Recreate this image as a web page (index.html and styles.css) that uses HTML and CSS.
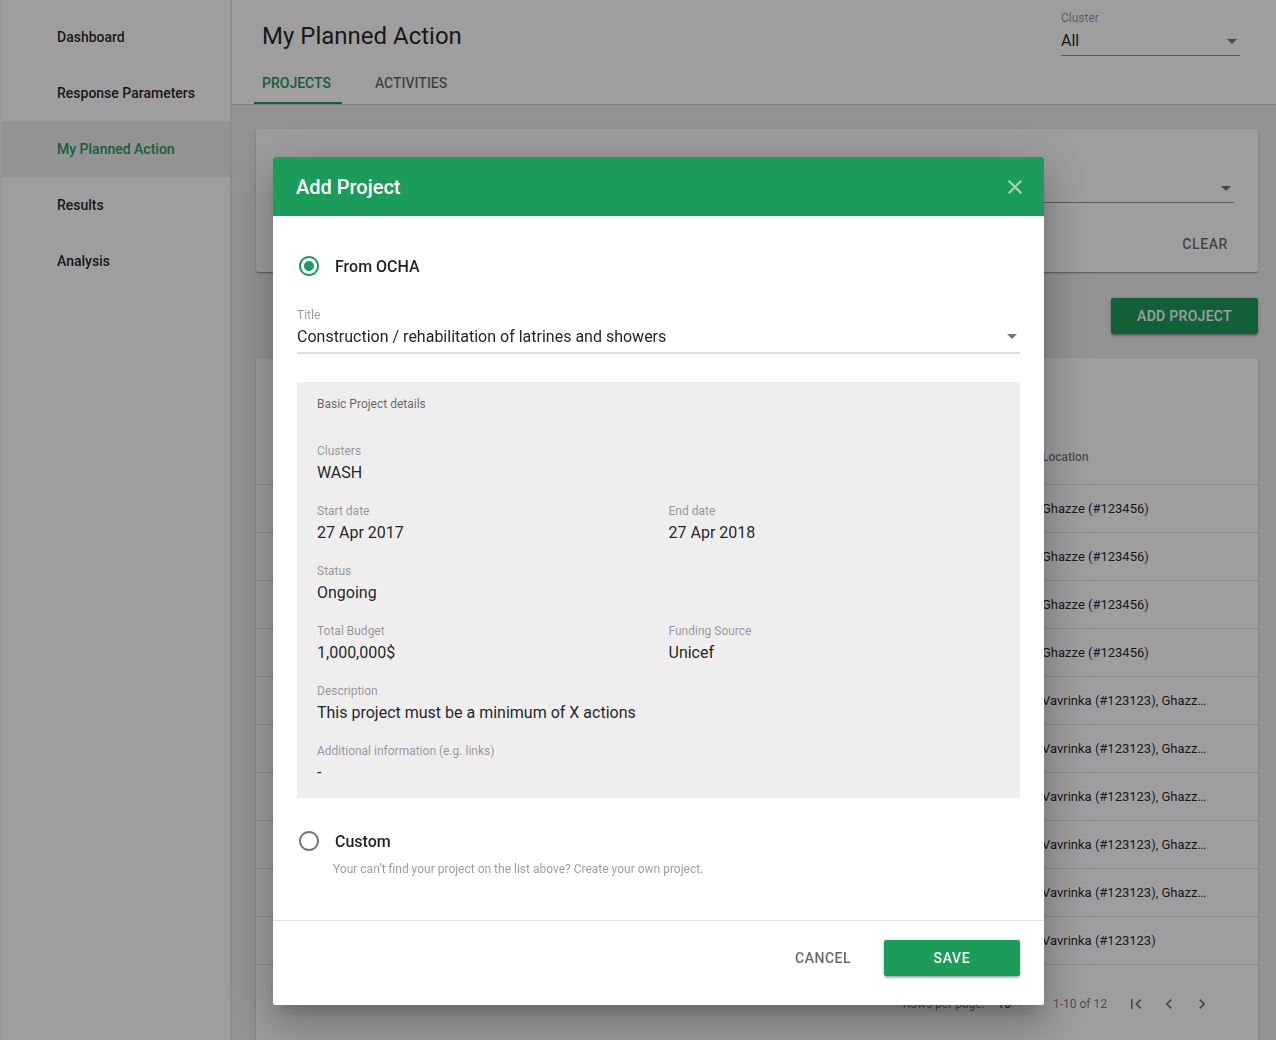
FILE: index.html
```html
<!DOCTYPE html>
<html lang="en">
<head>
<meta charset="utf-8">
<title>My Planned Action</title>
<link rel="stylesheet" href="styles.css">
</head>
<body>
<div class="app">
  <nav class="sidebar">
    <div class="nav-item">Dashboard</div>
    <div class="nav-item">Response Parameters</div>
    <div class="nav-item active">My Planned Action</div>
    <div class="nav-item">Results</div>
    <div class="nav-item">Analysis</div>
  </nav>
  <div class="main">
    <header class="topbar">
      <div class="topbar-left">
        <h1 class="page-title">My Planned Action</h1>
        <div class="tabs">
          <div class="tab active">PROJECTS</div>
          <div class="tab">ACTIVITIES</div>
        </div>
      </div>
      <div class="cluster-select">
        <div class="sel-label">Cluster</div>
        <div class="sel-field">
          <span class="sel-value">All</span>
          <svg class="arrow" viewBox="0 0 24 24"><path d="M7 10l5 5 5-5z"/></svg>
        </div>
      </div>
    </header>
    <section class="content">
      <div class="card filters">
        <div class="filter-row">
          <div class="filter-field"><div class="sel-label">Partner</div><div class="sel-field"><span class="sel-value"></span><svg class="arrow" viewBox="0 0 24 24"><path d="M7 10l5 5 5-5z"/></svg></div></div>
          <div class="filter-field"><div class="sel-label">Status</div><div class="sel-field"><span class="sel-value"></span><svg class="arrow" viewBox="0 0 24 24"><path d="M7 10l5 5 5-5z"/></svg></div></div>
          <div class="filter-field"><div class="sel-label">Location</div><div class="sel-field"><span class="sel-value"></span><svg class="arrow" viewBox="0 0 24 24"><path d="M7 10l5 5 5-5z"/></svg></div></div>
        </div>
        <div class="filter-actions"><button class="text-btn">CLEAR</button></div>
      </div>
      <div class="toolbar"><button class="btn-primary add-btn">ADD PROJECT</button></div>
      <div class="card table-card">
        <div class="table-title"></div>
        <div class="trow thead"><div class="tcell fill"></div><div class="tcell loc">Location</div></div>
        <div class="trow"><div class="tcell fill"></div><div class="tcell loc">Ghazze (#123456)</div></div>
        <div class="trow"><div class="tcell fill"></div><div class="tcell loc">Ghazze (#123456)</div></div>
        <div class="trow"><div class="tcell fill"></div><div class="tcell loc">Ghazze (#123456)</div></div>
        <div class="trow"><div class="tcell fill"></div><div class="tcell loc">Ghazze (#123456)</div></div>
        <div class="trow"><div class="tcell fill"></div><div class="tcell loc">Vavrinka (#123123), Ghazze (#123456)</div></div>
        <div class="trow"><div class="tcell fill"></div><div class="tcell loc">Vavrinka (#123123), Ghazze (#123456)</div></div>
        <div class="trow"><div class="tcell fill"></div><div class="tcell loc">Vavrinka (#123123), Ghazze (#123456)</div></div>
        <div class="trow"><div class="tcell fill"></div><div class="tcell loc">Vavrinka (#123123), Ghazze (#123456)</div></div>
        <div class="trow"><div class="tcell fill"></div><div class="tcell loc">Vavrinka (#123123), Ghazze (#123456)</div></div>
        <div class="trow"><div class="tcell fill"></div><div class="tcell loc">Vavrinka (#123123)</div></div>
        <div class="pagination">
          <span class="pg-label">Rows per page:</span>
          <span class="pg-select">10<svg class="pg-arrow" viewBox="0 0 24 24"><path d="M7 10l5 5 5-5z"/></svg></span>
          <span class="pg-range">1-10 of 12</span>
          <span class="pg-btn"><svg viewBox="0 0 24 24"><path d="M18.41 16.59L13.82 12l4.59-4.59L17 6l-6 6 6 6zM6 6h2v12H6z"/></svg></span>
          <span class="pg-btn"><svg viewBox="0 0 24 24"><path d="M15.41 16.59L10.83 12l4.58-4.59L14 6l-6 6 6 6z"/></svg></span>
          <span class="pg-btn"><svg viewBox="0 0 24 24"><path d="M10 6L8.59 7.41 13.17 12l-4.58 4.59L10 18l6-6z"/></svg></span>
        </div>
      </div>
    </section>
  </div>
</div>

<div class="backdrop"></div>

<div class="dialog">
  <div class="dialog-header">
    <h2 class="dialog-title">Add Project</h2>
    <svg class="close-icon" viewBox="0 0 24 24"><path d="M19 6.41L17.59 5 12 10.59 6.41 5 5 6.41 10.59 12 5 17.59 6.41 19 12 13.41 17.59 19 19 17.59 13.41 12z"/></svg>
  </div>
  <div class="dialog-body">
    <div class="radio-row">
      <svg class="radio checked" viewBox="0 0 24 24"><path d="M12 7c-2.76 0-5 2.24-5 5s2.24 5 5 5 5-2.24 5-5-2.24-5-5-5zm0-5C6.48 2 2 6.48 2 12s4.48 10 10 10 10-4.48 10-10S17.52 2 12 2zm0 18c-4.42 0-8-3.58-8-8s3.58-8 8-8 8 3.58 8 8-3.58 8-8 8z"/></svg>
      <span class="radio-label">From OCHA</span>
    </div>
    <div class="title-field">
      <div class="f-label">Title</div>
      <div class="title-value">
        <span>Construction / rehabilitation of latrines and showers</span>
        <svg class="arrow" viewBox="0 0 24 24"><path d="M7 10l5 5 5-5z"/></svg>
      </div>
    </div>
    <div class="details">
      <div class="details-title">Basic Project details</div>
      <div class="details-grid">
        <div class="d-field"><div class="f-label">Clusters</div><div class="d-value">WASH</div></div>
        <div class="d-field"></div>
        <div class="d-field"><div class="f-label">Start date</div><div class="d-value">27 Apr 2017</div></div>
        <div class="d-field"><div class="f-label">End date</div><div class="d-value">27 Apr 2018</div></div>
        <div class="d-field full"><div class="f-label">Status</div><div class="d-value">Ongoing</div></div>
        <div class="d-field"><div class="f-label">Total Budget</div><div class="d-value">1,000,000$</div></div>
        <div class="d-field"><div class="f-label">Funding Source</div><div class="d-value">Unicef</div></div>
        <div class="d-field full"><div class="f-label">Description</div><div class="d-value">This project must be a minimum of X actions</div></div>
        <div class="d-field full last"><div class="f-label">Additional information (e.g. links)</div><div class="d-value">-</div></div>
      </div>
    </div>
    <div class="radio-row custom-row">
      <svg class="radio" viewBox="0 0 24 24"><path d="M12 2C6.48 2 2 6.48 2 12s4.48 10 10 10 10-4.48 10-10S17.52 2 12 2zm0 18c-4.42 0-8-3.58-8-8s3.58-8 8-8 8 3.58 8 8-3.58 8-8 8z"/></svg>
      <span class="radio-label">Custom</span>
    </div>
    <div class="hint">Your can’t find your project on the list above? Create your own project.</div>
  </div>
  <div class="dialog-footer">
    <button class="text-btn cancel-btn">CANCEL</button>
    <button class="btn-primary save-btn">SAVE</button>
  </div>
</div>
</body>
</html>
```

FILE: styles.css
```css
* { box-sizing: border-box; }

html, body {
  margin: 0;
  padding: 0;
  width: 1276px;
  height: 1040px;
  overflow: hidden;
}

body {
  font-family: Roboto, "Liberation Sans", Arial, sans-serif;
  color: rgba(0, 0, 0, 0.87);
  background: #eeeeee;
}

button {
  font-family: inherit;
  border: none;
  background: none;
  cursor: pointer;
  padding: 0;
}

.app {
  display: flex;
  height: 1040px;
}

/* Sidebar */
.sidebar {
  width: 232px;
  flex: 0 0 232px;
  background: #ffffff;
  border-left: 2px solid #f6f6f6;
  border-right: 2px solid #e4e4e4;
  padding-top: 9px;
}

.nav-item {
  height: 56px;
  display: flex;
  align-items: center;
  padding-left: 55px;
  font-size: 14px;
  font-weight: 500;
  color: rgba(0, 0, 0, 0.87);
}

.nav-item.active {
  background: #eeeeee;
  color: #1c9c5a;
}

/* Main */
.main {
  flex: 1;
  display: flex;
  flex-direction: column;
  min-width: 0;
}

.topbar {
  height: 105px;
  flex: 0 0 105px;
  background: #ffffff;
  border-bottom: 1px solid #cfcfcf;
  display: flex;
  justify-content: space-between;
}

.topbar-left {
  padding-left: 22px;
  display: flex;
  flex-direction: column;
}

.page-title {
  margin: 22px 0 0 8px;
  font-size: 24px;
  line-height: 28px;
  font-weight: 400;
  color: rgba(0, 0, 0, 0.87);
}

.tabs {
  display: flex;
  margin-top: 12px;
}

.tab {
  height: 42px;
  padding: 2px 10px 0;
  display: flex;
  align-items: center;
  font-size: 14px;
  font-weight: 500;
  letter-spacing: 0;
  color: rgba(0, 0, 0, 0.6);
  border-bottom: 2px solid transparent;
}

.tab + .tab { margin-left: 23px; }

.tab.active {
  color: #1c9c5a;
  border-bottom-color: #1c9c5a;
  padding-left: 8px;
  padding-right: 11px;
}

.cluster-select {
  width: 179px;
  margin-right: 36px;
  padding-top: 11px;
}

.sel-label {
  font-size: 12px;
  line-height: 14px;
  color: rgba(0, 0, 0, 0.45);
}

.sel-field {
  margin-top: 6px;
  height: 25px;
  padding-bottom: 4px;
  border-bottom: 1px solid rgba(0, 0, 0, 0.42);
  display: flex;
  align-items: center;
  justify-content: space-between;
}

.sel-value {
  font-size: 16px;
  line-height: 20px;
  color: rgba(0, 0, 0, 0.87);
}

.arrow {
  width: 24px;
  height: 24px;
  fill: rgba(0, 0, 0, 0.54);
  margin-right: -4px;
  flex: 0 0 24px;
}

/* Content */
.content {
  flex: 1;
  padding: 24px 18px 0 24px;
  display: flex;
  flex-direction: column;
}

.card {
  background: #ffffff;
  border-radius: 2px;
  box-shadow: 0 1px 3px rgba(0, 0, 0, 0.2), 0 1px 1px rgba(0, 0, 0, 0.14), 0 2px 1px -1px rgba(0, 0, 0, 0.12);
}

.filters {
  height: 143px;
  padding: 29px 24px 10px;
  display: flex;
  flex-direction: column;
}

.filter-row {
  display: grid;
  grid-template-columns: 1fr 1fr 1fr;
  column-gap: 24px;
}

.filter-field .sel-label { color: transparent; }

.filter-actions {
  margin-top: 23px;
  display: flex;
  justify-content: flex-end;
  margin-right: -2px;
}

.text-btn {
  height: 36px;
  padding: 0 8px;
  font-size: 14px;
  font-weight: 500;
  letter-spacing: 0.6px;
  color: rgba(0, 0, 0, 0.6);
}

.toolbar {
  margin-top: 26px;
  display: flex;
  justify-content: flex-end;
}

.btn-primary {
  height: 36px;
  background: #1c9c5a;
  color: #ffffff;
  font-size: 14px;
  font-weight: 500;
  letter-spacing: 0.7px;
  border-radius: 2px;
  box-shadow: 0 1px 5px rgba(0, 0, 0, 0.2), 0 2px 2px rgba(0, 0, 0, 0.14), 0 3px 1px -2px rgba(0, 0, 0, 0.12);
}

.add-btn {
  width: 147px;
  letter-spacing: 0.3px;
}

.table-card {
  margin-top: 24px;
  flex: 1;
}

.table-title {
  height: 71px;
}

.trow {
  display: flex;
  height: 48px;
  border-bottom: 1px solid #e0e0e0;
  align-items: center;
}

.trow.thead {
  height: 56px;
}

.tcell.fill { flex: 1; }

.tcell.loc {
  width: 216px;
  flex: 0 0 216px;
  padding-right: 50px;
  font-size: 13px;
  white-space: nowrap;
  overflow: hidden;
  text-overflow: ellipsis;
  color: rgba(0, 0, 0, 0.87);
}

.thead .tcell.loc {
  font-size: 12px;
  font-weight: 500;
  color: rgba(0, 0, 0, 0.54);
}

.pagination {
  height: 78px;
  display: flex;
  justify-content: flex-end;
  align-items: center;
  padding-right: 40px;
  font-size: 12px;
  color: rgba(0, 0, 0, 0.54);
}

.pg-label { margin-right: 13px; }

.pg-select {
  display: flex;
  align-items: center;
  margin-right: 27px;
  color: rgba(0, 0, 0, 0.87);
}

.pg-arrow {
  width: 14px;
  height: 14px;
  margin-left: 1px;
  fill: rgba(0, 0, 0, 0.54);
}

.pg-range { margin-right: 12px; }

.pg-btn {
  width: 33px;
  height: 33px;
  display: flex;
  align-items: center;
  justify-content: center;
}

.pg-btn svg {
  width: 20px;
  height: 20px;
  fill: rgba(0, 0, 0, 0.54);
}

/* Modal */
.backdrop {
  position: fixed;
  inset: 0;
  background: rgba(0, 0, 0, 0.38);
}

.dialog {
  position: absolute;
  left: 273px;
  top: 157px;
  width: 771px;
  height: 848px;
  background: #ffffff;
  border-radius: 2px;
  display: flex;
  flex-direction: column;
  box-shadow: 0 11px 15px -7px rgba(0, 0, 0, 0.2), 0 24px 38px 3px rgba(0, 0, 0, 0.14), 0 9px 46px 8px rgba(0, 0, 0, 0.12);
}

.dialog-header {
  height: 59px;
  flex: 0 0 59px;
  background: #1c9c5a;
  border-radius: 2px 2px 0 0;
  display: flex;
  align-items: center;
  justify-content: space-between;
  padding: 0 17px 0 23px;
}

.dialog-title {
  margin: 0;
  font-size: 20px;
  font-weight: 500;
  color: #ffffff;
}

.close-icon {
  width: 24px;
  height: 24px;
  fill: rgba(255, 255, 255, 0.6);
}

.dialog-body {
  flex: 1;
  padding: 38px 24px 0;
}

.radio-row {
  display: flex;
  align-items: center;
  height: 24px;
  gap: 14px;
}

.radio {
  width: 24px;
  height: 24px;
  fill: rgba(0, 0, 0, 0.54);
}

.radio.checked { fill: #1c9c5a; }

.radio-label {
  font-size: 16px;
  font-weight: 500;
  color: rgba(0, 0, 0, 0.87);
}

.title-field {
  margin-top: 30px;
}

.f-label {
  font-size: 12px;
  line-height: 14px;
  color: rgba(0, 0, 0, 0.4);
}

.title-value {
  margin-top: 5px;
  height: 27px;
  padding-bottom: 6px;
  border-bottom: 2px solid #e0e0e0;
  display: flex;
  justify-content: space-between;
  align-items: center;
  font-size: 16px;
  line-height: 19px;
}

.title-value .arrow {
  margin-top: -3px;
  margin-bottom: -2px;
}

.details {
  margin-top: 28px;
  background: #eeeeee;
  padding: 15px 20px 16px;
}

.details-title {
  font-size: 12px;
  line-height: 14px;
  color: rgba(0, 0, 0, 0.6);
}

.details-grid {
  margin-top: 33px;
  display: grid;
  grid-template-columns: 1fr 1fr;
  column-gap: 20px;
}

.d-field {
  margin-bottom: 22px;
}

.d-field.full { grid-column: 1 / span 2; }

.d-field.last { margin-bottom: 0; }

.d-value {
  margin-top: 5px;
  font-size: 16px;
  line-height: 19px;
  color: rgba(0, 0, 0, 0.87);
}

.custom-row {
  margin-top: 31px;
}

.hint {
  margin-top: 9px;
  padding-left: 36px;
  font-size: 12px;
  line-height: 14px;
  color: rgba(0, 0, 0, 0.4);
}

.dialog-footer {
  height: 85px;
  flex: 0 0 85px;
  border-top: 1px solid #e0e0e0;
  padding: 19px 24px 0;
  display: flex;
  justify-content: flex-end;
  align-items: flex-start;
}

.cancel-btn {
  padding: 0 16px;
  margin-right: 17px;
  letter-spacing: 0.5px;
}

.save-btn {
  width: 136px;
}
```
